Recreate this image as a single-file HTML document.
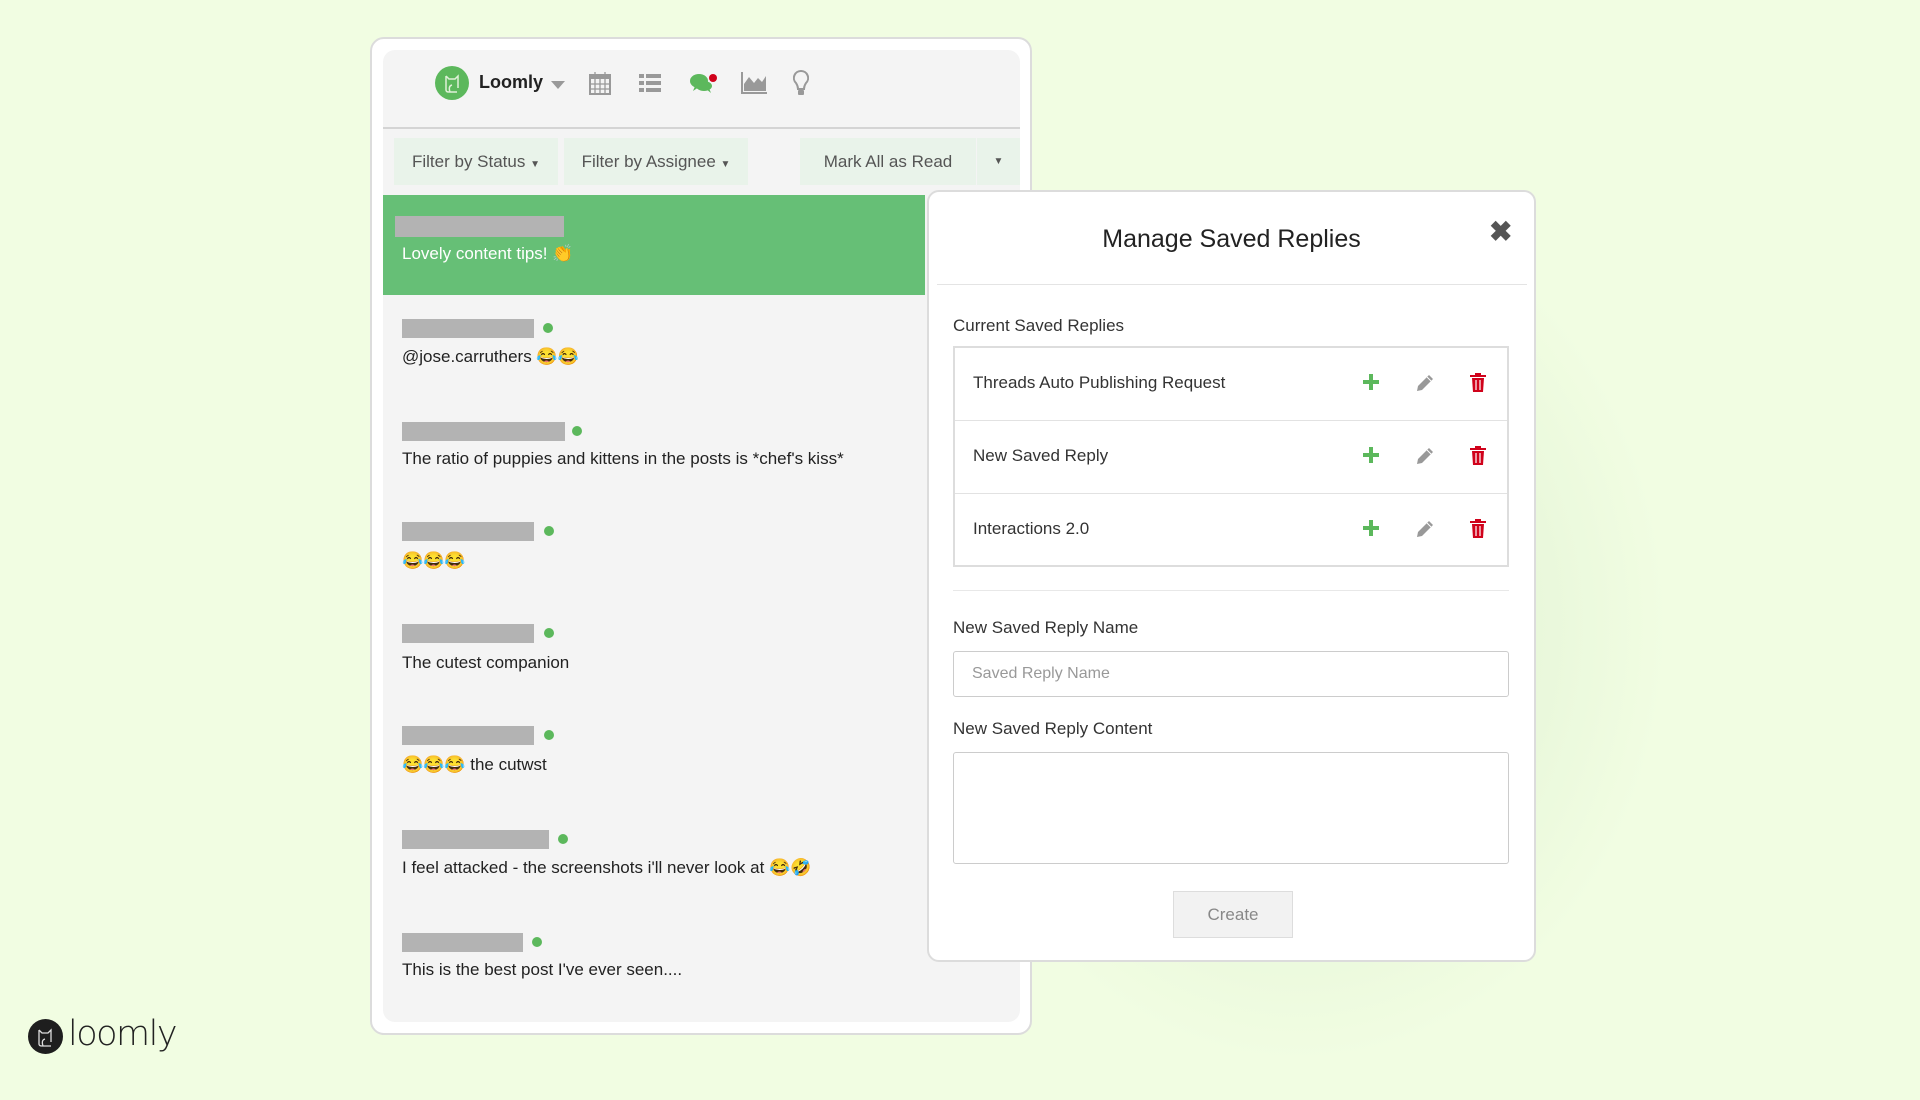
<!DOCTYPE html>
<html><head><meta charset="utf-8"><style>
*{box-sizing:border-box;margin:0;padding:0}
body{width:1920px;height:1080px;overflow:hidden;background:#f1fde2;font-family:"Liberation Sans",sans-serif;color:#222;position:relative}
.glow{position:absolute;left:900px;top:150px;width:800px;height:950px;background:radial-gradient(ellipse at center,rgba(200,225,190,.55),rgba(241,253,226,0) 65%)}
.outer{position:absolute;left:370px;top:37px;width:662px;height:998px;background:#fff;border:2px solid #dcdcdc;border-radius:14px}
.inner{position:absolute;left:383px;top:50px;width:637px;height:972px;background:#f4f4f4;border-radius:12px;overflow:hidden}
.hdr{position:absolute;left:0;top:0;width:637px;height:79px;border-bottom:2px solid #d4d4d4}
.tb{position:absolute;top:88px;height:47px;background:#e9f3ea;color:#555;font-size:17px;line-height:47px;text-align:center}
.abs{position:absolute}
.bar{position:absolute;height:19px;background:#b3b3b3}
.dot{position:absolute;width:10px;height:10px;border-radius:50%;background:#5cb85c}
.msg{position:absolute;left:19px;font-size:17px;color:#222}
.modal{position:absolute;left:927px;top:190px;width:609px;height:772px;background:#fff;border:2px solid #dcdcdc;border-radius:12px}
.lbl{position:absolute;left:24px;font-size:17px;color:#333}
.row{position:absolute;left:0;width:552px;height:73px;border-bottom:1px solid #e2e2e2;font-size:17px;line-height:70px;padding-left:18px;color:#333}
.row svg{position:absolute;top:25px}
</style></head><body>
<div class="glow"></div>
<div class="outer"></div>
<div class="inner">
 <div class="hdr">
  <div class="abs" style="left:52px;top:16px;width:34px;height:34px;border-radius:50%;background:#5cb85c"><svg width="34" height="34" viewBox="0 0 34 34"><path d="M11 10 L11 24 Q11 26 14 26 L22 26 M11 10 L14 13 L20 13 L23 10 L23 22 M15 26 Q13 20 17 19" fill="none" stroke="#dff0d8" stroke-width="1.5"/></svg></div>
  <div class="abs" style="left:96px;top:22px;font-size:18px;font-weight:bold;color:#222">Loomly</div>
  <div class="abs" style="left:168px;top:31px;width:0;height:0;border-left:7px solid transparent;border-right:7px solid transparent;border-top:8px solid #999"></div>
  <svg class="abs" style="left:206px;top:21px" width="22" height="24" viewBox="0 0 22 24"><rect x="1" y="4" width="20" height="19" fill="none" stroke="#999" stroke-width="2"/><rect x="1" y="4" width="20" height="4" fill="#999"/><path d="M6 1v5M16 1v5M1 13h20M1 18h20M6 8v15M11 8v15M16 8v15" stroke="#999" stroke-width="1.3"/></svg>
  <svg class="abs" style="left:256px;top:24px" width="22" height="18" viewBox="0 0 22 18"><g fill="#999"><rect x="0" y="0" width="5" height="4"/><rect x="7" y="0" width="15" height="4"/><rect x="0" y="7" width="5" height="4"/><rect x="7" y="7" width="15" height="4"/><rect x="0" y="14" width="5" height="4"/><rect x="7" y="14" width="15" height="4"/></g></svg>
  <svg class="abs" style="left:306px;top:22px" width="30" height="24" viewBox="0 0 30 24"><ellipse cx="10" cy="9" rx="9" ry="7" fill="#5cb85c"/><ellipse cx="15" cy="14" rx="8" ry="5" fill="#5cb85c"/><path d="M6 14 L4 19 L10 15Z M17 17 L22 21 L20 16Z" fill="#5cb85c"/><circle cx="24" cy="6" r="4" fill="#d0021b"/></svg>
  <svg class="abs" style="left:358px;top:22px" width="26" height="22" viewBox="0 0 26 22"><path d="M1 0v21h25" stroke="#999" stroke-width="2" fill="none"/><path d="M3 19 L3 12 L8 5 L13 11 L17 6 L21 10 L25 4 L25 19Z" fill="#999"/></svg>
  <svg class="abs" style="left:410px;top:20px" width="16" height="27" viewBox="0 0 16 27"><path d="M8 1 A7 7 0 0 0 3 13 Q5 16 5 19 L11 19 Q11 16 13 13 A7 7 0 0 0 8 1Z" fill="none" stroke="#999" stroke-width="2"/><rect x="5" y="20" width="6" height="5" rx="1" fill="#999"/></svg>
 </div>
 <div class="tb" style="left:11px;width:164px">Filter by Status <span style="font-size:10px">▼</span></div>
 <div class="tb" style="left:181px;width:184px">Filter by Assignee <span style="font-size:10px">▼</span></div>
 <div class="tb" style="left:417px;width:176px">Mark All as Read</div>
 <div class="tb" style="left:594px;width:43px;font-size:10px">▼</div>
 <div class="abs" style="left:0;top:145px;width:542px;height:100px;background:#66bf76"></div>
 <div class="bar" style="left:12px;top:166px;width:169px;height:21px"></div>
 <div class="msg" style="left:19px;top:194px;color:#fff">Lovely content tips! 👏</div>
 <div class="bar" style="left:19px;top:269px;width:132px"></div><div class="dot" style="left:160px;top:273px"></div>
 <div class="msg" style="top:297px">@jose.carruthers 😂😂</div>
 <div class="bar" style="left:19px;top:372px;width:163px"></div><div class="dot" style="left:189px;top:376px"></div>
 <div class="msg" style="top:399px">The ratio of puppies and kittens in the posts is *chef's kiss*</div>
 <div class="bar" style="left:19px;top:472px;width:132px"></div><div class="dot" style="left:161px;top:476px"></div>
 <div class="msg" style="top:501px">😂😂😂</div>
 <div class="bar" style="left:19px;top:574px;width:132px"></div><div class="dot" style="left:161px;top:578px"></div>
 <div class="msg" style="top:603px">The cutest companion</div>
 <div class="bar" style="left:19px;top:676px;width:132px"></div><div class="dot" style="left:161px;top:680px"></div>
 <div class="msg" style="top:705px">😂😂😂 the cutwst</div>
 <div class="bar" style="left:19px;top:780px;width:147px"></div><div class="dot" style="left:175px;top:784px"></div>
 <div class="msg" style="top:808px">I feel attacked - the screenshots i'll never look at 😂🤣</div>
 <div class="bar" style="left:19px;top:883px;width:121px"></div><div class="dot" style="left:149px;top:887px"></div>
 <div class="msg" style="top:910px">This is the best post I've ever seen....</div>
</div>
<div class="modal">
 <div class="abs" style="left:0;width:605px;top:33px;text-align:center;font-size:25px;color:#222">Manage Saved Replies</div>
 <div class="abs" style="left:560px;top:26px;font-size:28px;font-weight:bold;color:#555;line-height:28px">✖</div>
 <div class="abs" style="left:8px;top:92px;width:590px;height:1px;background:#e4e4e4"></div>
 <div class="lbl" style="top:124px">Current Saved Replies</div>
 <div class="abs" style="left:24px;top:154px;width:556px;height:221px;border:2px solid #ddd">
  <div class="row" style="top:0">Threads Auto Publishing Request
   <svg style="left:407px" width="18" height="18" viewBox="0 0 18 18"><path d="M9 1v16M1 9h16" stroke="#5cb85c" stroke-width="4"/></svg>
   <svg style="left:460px" width="20" height="20" viewBox="0 0 20 20"><path d="M2 18 L3 13 L14 2 L18 6 L7 17Z" fill="#999"/><path d="M12 4 L16 8" stroke="#fff" stroke-width="1"/></svg>
   <svg style="left:515px" width="16" height="19" viewBox="0 0 16 19"><rect x="0" y="2" width="16" height="2" fill="#d0021b"/><rect x="5" y="0" width="6" height="3" fill="#d0021b"/><path d="M2 5h12l-1 14H3Z" fill="#d0021b"/><path d="M6 7v10M10 7v10" stroke="#fff" stroke-width="1.2"/></svg></div>
  <div class="row" style="top:73px">New Saved Reply
   <svg style="left:407px" width="18" height="18" viewBox="0 0 18 18"><path d="M9 1v16M1 9h16" stroke="#5cb85c" stroke-width="4"/></svg>
   <svg style="left:460px" width="20" height="20" viewBox="0 0 20 20"><path d="M2 18 L3 13 L14 2 L18 6 L7 17Z" fill="#999"/><path d="M12 4 L16 8" stroke="#fff" stroke-width="1"/></svg>
   <svg style="left:515px" width="16" height="19" viewBox="0 0 16 19"><rect x="0" y="2" width="16" height="2" fill="#d0021b"/><rect x="5" y="0" width="6" height="3" fill="#d0021b"/><path d="M2 5h12l-1 14H3Z" fill="#d0021b"/><path d="M6 7v10M10 7v10" stroke="#fff" stroke-width="1.2"/></svg></div>
  <div class="row" style="top:146px;border-bottom:none">Interactions 2.0
   <svg style="left:407px" width="18" height="18" viewBox="0 0 18 18"><path d="M9 1v16M1 9h16" stroke="#5cb85c" stroke-width="4"/></svg>
   <svg style="left:460px" width="20" height="20" viewBox="0 0 20 20"><path d="M2 18 L3 13 L14 2 L18 6 L7 17Z" fill="#999"/><path d="M12 4 L16 8" stroke="#fff" stroke-width="1"/></svg>
   <svg style="left:515px" width="16" height="19" viewBox="0 0 16 19"><rect x="0" y="2" width="16" height="2" fill="#d0021b"/><rect x="5" y="0" width="6" height="3" fill="#d0021b"/><path d="M2 5h12l-1 14H3Z" fill="#d0021b"/><path d="M6 7v10M10 7v10" stroke="#fff" stroke-width="1.2"/></svg></div>
 </div>
 <div class="abs" style="left:24px;top:398px;width:556px;height:1px;background:#e8e8e8"></div>
 <div class="lbl" style="top:426px">New Saved Reply Name</div>
 <div class="abs" style="left:24px;top:459px;width:556px;height:46px;border:1px solid #ccc;border-radius:3px;font-size:16px;color:#999;line-height:44px;padding-left:18px">Saved Reply Name</div>
 <div class="lbl" style="top:527px">New Saved Reply Content</div>
 <div class="abs" style="left:24px;top:560px;width:556px;height:112px;border:1px solid #ccc;border-radius:3px"></div>
 <div class="abs" style="left:244px;top:699px;width:120px;height:47px;background:#f2f2f2;border:1px solid #ddd;font-size:17px;color:#888;line-height:45px;text-align:center">Create</div>
</div>
<div class="abs" style="left:28px;top:1019px;width:35px;height:35px;border-radius:50%;background:#1e1e1e"><svg width="35" height="35" viewBox="0 0 35 35"><path d="M11 11 L11 25 Q11 27 14 27 L23 27 M11 11 L14 14 L20 14 L23 11 L23 23 M15 27 Q13 21 17 20" fill="none" stroke="#ddd" stroke-width="1.3"/></svg></div>
<div class="abs" style="left:68px;top:1014px;font-size:35px;color:#222;font-family:'DejaVu Sans',sans-serif;font-weight:200;letter-spacing:-1.5px;line-height:40px">loomly</div>
</body></html>
